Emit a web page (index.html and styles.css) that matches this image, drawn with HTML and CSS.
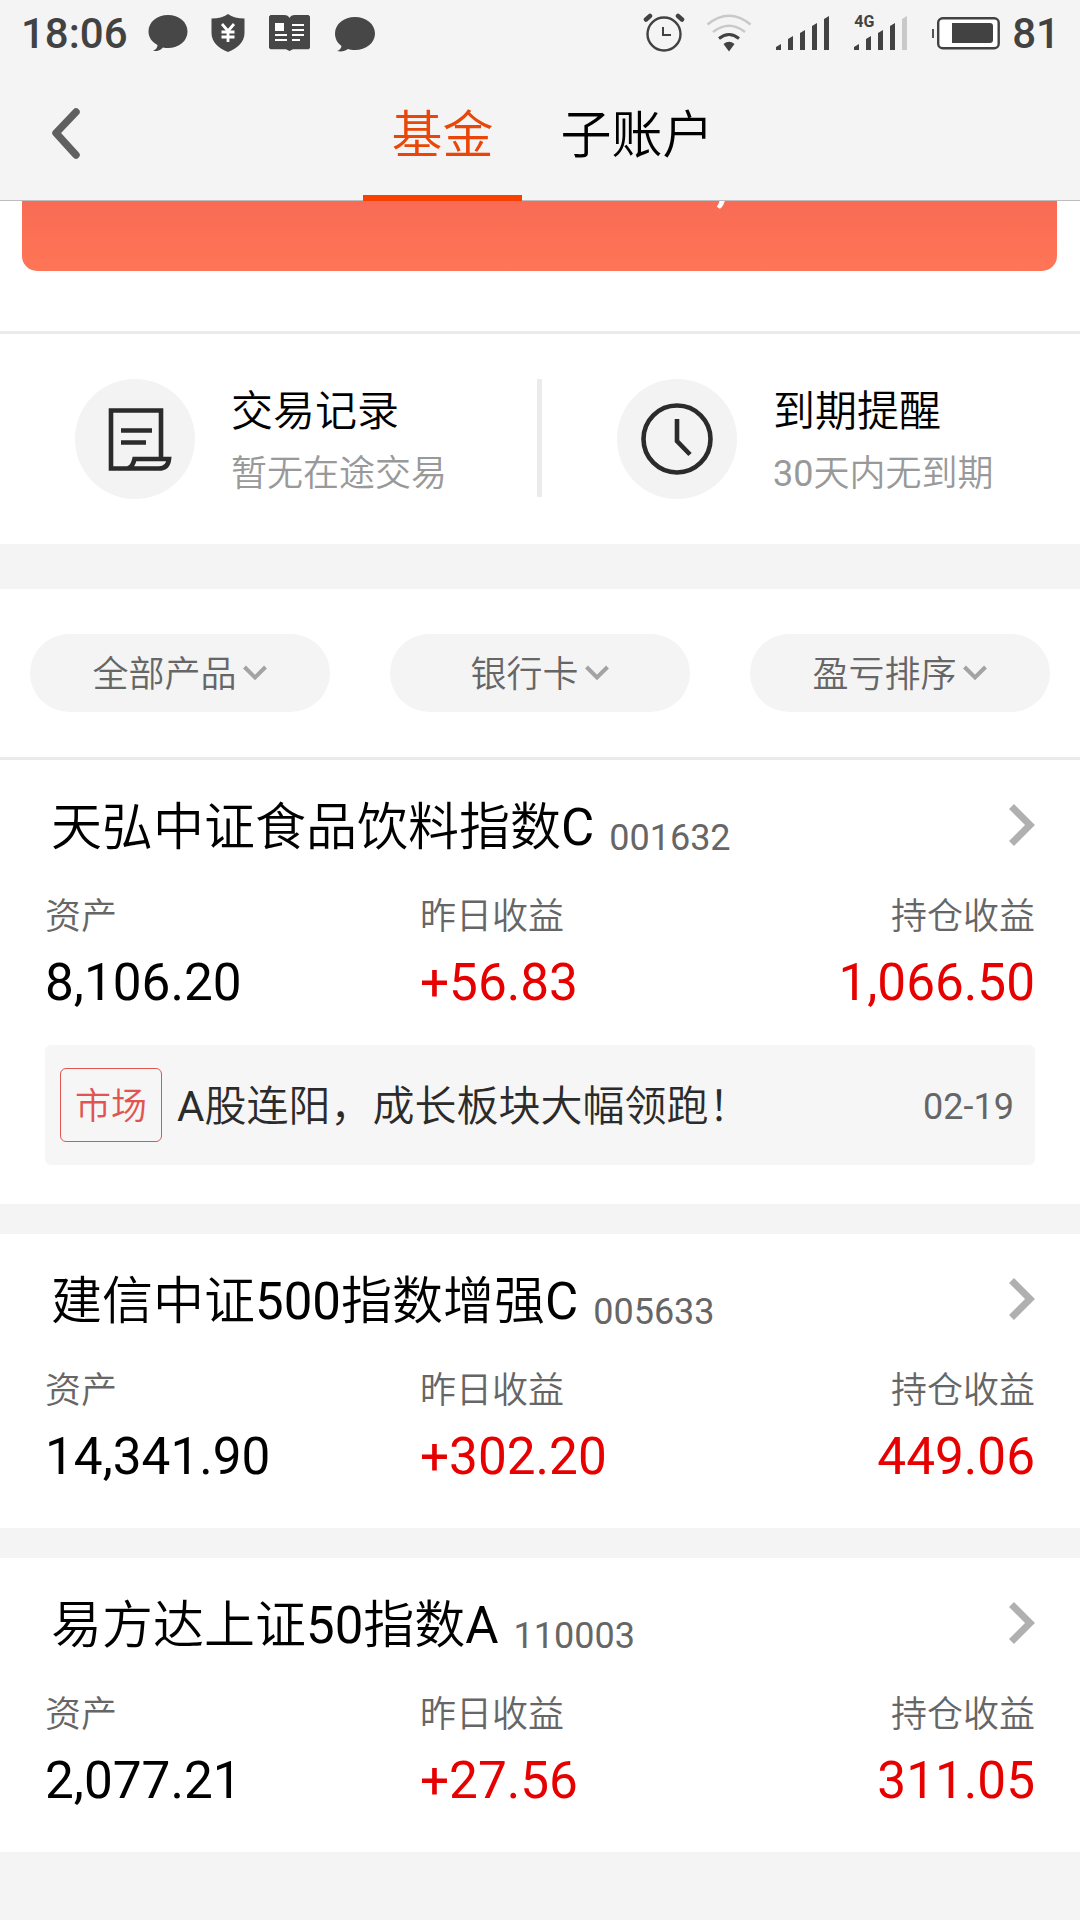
FILE: index.html
```html
<!DOCTYPE html>
<html lang="zh-CN">
<head>
  <meta charset="UTF-8">
  <meta name="viewport" content="width=device-width, initial-scale=1.0">
  <title>基金</title>
  <link rel="stylesheet" href="styles.css">
</head>
<body>
  <!-- Status Bar -->
  <div class="status-bar">
    <div class="status-left">
      <span class="status-time">18:06</span>
      <svg class="icon-bubble" width="40" height="37" viewBox="0 0 40 37">
        <path d="M20 0C31 0 39.500 7 39.500 16.500S31 33 20 33c-2 0-3.500-.2-5-.6C12 35.500 9 36.500 5 36c3-1.500 4.500-3.500 4.500-6C4 27 .5 22.500.5 16.500.5 7 9 0 20 0z" fill="#474747"/>
      </svg>
      <svg class="icon-shield" width="34" height="38" viewBox="0 0 34 38">
        <path d="M17 0c4 3 10 4.500 16.500 4.500V19c0 9-7 15.500-16.500 19C7.500 34.500.5 28 .5 19V4.500C7 4.500 13 3 17 0z" fill="#474747"/>
        <path d="M11 10l6 7 6-7M10.500 18h13M10.500 23h13M17 17v11" fill="none" stroke="#fff" stroke-width="2.800"/>
      </svg>
      <svg class="icon-book" width="41" height="37" viewBox="0 0 41 37">
        <path d="M1.500 1H15c3 0 4.500 1 5.500 3C21.500 2 23 1 26 1h13.500L41 2.500V34l-1.500 1.200H24L20.500 37 17 35.200H1.500L0 34V2.500z" fill="#474747"/>
        <path d="M6 9h9v8H6z" fill="#fff"/>
        <path d="M6 21h12M6 26h12M23 11h12M23 16h12M23 21h12M23 26h8" stroke="#fff" stroke-width="2"/>
      </svg>
      <svg class="icon-bubble-low" width="40" height="35" viewBox="0 0 40 35">
        <path d="M20 0c11 0 20 7 20 16.500S31 33 20 33c-3 0-5-.3-7-1-3 2.300-7 3-11 2 3-1 4-2.500 4.500-5C2.500 26 0 22 0 16.500 0 7 9 0 20 0z" fill="#474747"/>
      </svg>
    </div>
    <div class="status-right">
      <svg class="icon-alarm" width="42" height="39" viewBox="0 0 42 39">
        <circle cx="21" cy="21" r="16.500" fill="none" stroke="#424242" stroke-width="2.400"/>
        <path d="M20 14v8h8" fill="none" stroke="#424242" stroke-width="2"/>
        <path d="M3 6.500L7 3M39 6.500L35 3" stroke="#424242" stroke-width="4.500" stroke-linecap="round"/>
      </svg>
      <svg class="icon-wifi" width="46" height="38" viewBox="0 0 46 38">
        <path d="M1.500 10.500Q23-7 44.500 10.500M7 18Q23 5.500 39 18" fill="none" stroke="#c9c9c9" stroke-width="2.600"/>
        <path d="M13 24.500q10-8 20 0" fill="none" stroke="#424242" stroke-width="3"/>
        <path d="M17.500 30q5.500-4.500 11 0L23 37.500z" fill="#424242"/>
      </svg>
      <svg class="icon-signal" width="54" height="34" viewBox="0 0 54 34">
        <path d="M0 34v-3l5-3v6zM12 34V23l5-3v14zM24 34V17l5-3v20zM36 34V10l5-3v27zM48 34V3l5-3v34z" fill="#424242"/>
      </svg>
      <div class="signal-4g">
        <span class="network-label">4G</span>
        <svg width="54" height="34" viewBox="0 0 54 34">
          <path d="M0 34v-3l5-3v6zM12 34V23l5-3v14zM24 34V17l5-3v20zM36 34V10l5-3v27z" fill="#424242"/>
          <path d="M48 34V3l5-3v34z" fill="#c9c9c9"/>
        </svg>
      </div>
      <svg class="icon-battery" width="68" height="33" viewBox="0 0 68 33">
        <path d="M1 12v9" stroke="#424242" stroke-width="1.800"/>
        <rect x="6.200" y="1.200" width="60.500" height="30" rx="4.500" fill="#fff" stroke="#424242" stroke-width="2.400"/>
        <path d="M20 6h38q3 0 3 3v14q0 3-3 3H20z" fill="#424242"/>
      </svg>
      <span class="status-battery">81</span>
    </div>
  </div>

  <!-- Navigation -->
  <div class="nav">
    <svg class="back-btn" width="28" height="52" viewBox="0 0 28 52">
      <path d="M24 5L4 26l20 22" fill="none" stroke="#606060" stroke-width="7.500" stroke-linecap="round" stroke-linejoin="round"/>
    </svg>
    <div class="tab active">基金</div>
    <div class="tab">子账户</div>
  </div>

  <!-- Asset Banner -->
  <div class="banner-wrap">
    <div class="banner"><span class="banner-amount">,</span></div>
  </div>

  <!-- Quick Links -->
  <div class="quick-links">
    <div class="quick-item">
      <div class="quick-icon record">
        <svg width="64" height="64" viewBox="0 0 64 64">
          <path d="M53 51V3.500H3v58h19M26.500 52H61q-1 9.500-10 9.500H20q5-2 6.500-9.500z" fill="none" stroke="#2b2b2b" stroke-width="4.600"/>
          <path d="M13 23.500h31M13 35.500h25" stroke="#2b2b2b" stroke-width="4.500"/>
        </svg>
      </div>
      <div class="quick-text">
        <div class="quick-title">交易记录</div>
        <div class="quick-sub">暂无在途交易</div>
      </div>
    </div>
    <div class="quick-divider"></div>
    <div class="quick-item">
      <div class="quick-icon">
        <svg width="72" height="72" viewBox="0 0 72 72">
          <circle cx="36" cy="36" r="33.500" fill="none" stroke="#2b2b2b" stroke-width="4.600"/>
          <path d="M36 16v22l13 13.500" fill="none" stroke="#2b2b2b" stroke-width="4.600"/>
        </svg>
      </div>
      <div class="quick-text">
        <div class="quick-title">到期提醒</div>
        <div class="quick-sub">30天内无到期</div>
      </div>
    </div>
  </div>

  <!-- Filters -->
  <div class="filters">
    <div class="filter"><span>全部产品</span>
      <svg width="26" height="18" viewBox="0 0 26 18"><path d="M2.500 3L13 13.500 23.500 3" fill="none" stroke="#a3a3a3" stroke-width="4"/></svg>
    </div>
    <div class="filter"><span>银行卡</span>
      <svg width="26" height="18" viewBox="0 0 26 18"><path d="M2.500 3L13 13.500 23.500 3" fill="none" stroke="#a3a3a3" stroke-width="4"/></svg>
    </div>
    <div class="filter"><span>盈亏排序</span>
      <svg width="26" height="18" viewBox="0 0 26 18"><path d="M2.500 3L13 13.500 23.500 3" fill="none" stroke="#a3a3a3" stroke-width="4"/></svg>
    </div>
  </div>

  <!-- Fund List -->
  <div class="fund-list">
    <div class="fund">
      <div class="fund-head">
        <span class="fund-name">天弘中证食品饮料指数C</span>
        <span class="fund-code">001632</span>
        <svg class="fund-arrow" width="26" height="42" viewBox="0 0 26 42"><path d="M2.500 2.500L21 21 2.500 39.500" fill="none" stroke="#b0b0b0" stroke-width="7"/></svg>
      </div>
      <div class="fund-data">
        <div class="cell"><div class="label">资产</div><div class="value">8,106.20</div></div>
        <div class="cell"><div class="label">昨日收益</div><div class="value up">+56.83</div></div>
        <div class="cell right"><div class="label">持仓收益</div><div class="value up">1,066.50</div></div>
      </div>
      <div class="news">
        <span class="news-tag">市场</span>
        <span class="news-title">A股连阳，成长板块大幅领跑！</span>
        <span class="news-date">02-19</span>
      </div>
    </div>

    <div class="fund">
      <div class="fund-head">
        <span class="fund-name">建信中证500指数增强C</span>
        <span class="fund-code">005633</span>
        <svg class="fund-arrow" width="26" height="42" viewBox="0 0 26 42"><path d="M2.500 2.500L21 21 2.500 39.500" fill="none" stroke="#b0b0b0" stroke-width="7"/></svg>
      </div>
      <div class="fund-data">
        <div class="cell"><div class="label">资产</div><div class="value">14,341.90</div></div>
        <div class="cell"><div class="label">昨日收益</div><div class="value up">+302.20</div></div>
        <div class="cell right"><div class="label">持仓收益</div><div class="value up">449.06</div></div>
      </div>
    </div>

    <div class="fund">
      <div class="fund-head">
        <span class="fund-name">易方达上证50指数A</span>
        <span class="fund-code">110003</span>
        <svg class="fund-arrow" width="26" height="42" viewBox="0 0 26 42"><path d="M2.500 2.500L21 21 2.500 39.500" fill="none" stroke="#b0b0b0" stroke-width="7"/></svg>
      </div>
      <div class="fund-data">
        <div class="cell"><div class="label">资产</div><div class="value">2,077.21</div></div>
        <div class="cell"><div class="label">昨日收益</div><div class="value up">+27.56</div></div>
        <div class="cell right"><div class="label">持仓收益</div><div class="value up">311.05</div></div>
      </div>
    </div>
  </div>
</body>
</html>
```
FILE: styles.css
```css
/* General Styles */
* {
  box-sizing: border-box;
}

body {
  margin: 0;
  width: 1080px;
  height: 1920px;
  overflow: hidden;
  font-family: Roboto, 'Noto Sans CJK SC DemiLight', 'Noto Sans CJK SC', sans-serif;
  background-color: #f4f4f4;
  color: #000;
}

svg {
  display: block;
  flex-shrink: 0;
}

/* Status Bar */
.status-bar {
  display: flex;
  justify-content: space-between;
  height: 68px;
  padding: 0 20px 0 21px;
  color: #424242;
}

.status-left,
.status-right {
  display: flex;
  align-items: flex-start;
}

.status-time,
.status-battery {
  font-size: 42px;
  font-weight: 500;
  line-height: 67px;
}

.status-time {
  width: 127px;
}

.icon-bubble {
  margin-top: 15px;
}

.icon-shield {
  margin: 14px 0 0 23px;
}

.icon-book {
  margin: 14px 0 0 24px;
}

.icon-bubble-low {
  margin: 17px 0 0 25px;
}

.icon-alarm {
  margin-top: 13px;
}

.icon-wifi {
  margin: 14px 0 0 21px;
}

.icon-signal {
  margin: 16px 0 0 24px;
}

.signal-4g {
  position: relative;
  margin: 16px 0 0 24px;
}

.network-label {
  position: absolute;
  top: -3px;
  left: 0;
  font-size: 16px;
  font-weight: 700;
  line-height: 18px;
}

.icon-battery {
  margin: 17px 12px 0 24px;
}

/* Navigation */
.nav {
  display: flex;
  height: 133px;
  padding-left: 52px;
  border-bottom: 1px solid #bdbdbd;
}

.back-btn {
  margin: 39px 283px 0 0;
}

.tab {
  height: 133px;
  padding: 0 28.5px;
  font-size: 51px;
  line-height: 136px;
}

.tab + .tab {
  margin-left: 10px;
}

.tab.active {
  color: #e94709;
  border-bottom: 6px solid #f84000;
}

/* Asset Banner */
.banner-wrap {
  height: 133px;
  padding: 0 23px 0 22px;
  background-color: #fff;
  border-bottom: 3px solid #ebebeb;
}

.banner {
  height: 70px;
  overflow: hidden;
  border-radius: 0 0 15px 15px;
  background: linear-gradient(#f96b55, #ff7556);
}

.banner-amount {
  display: block;
  margin: -56px 0 0 694px;
  font-size: 60px;
  line-height: 70px;
  color: #fff;
}

/* Quick Links */
.quick-links {
  display: flex;
  height: 210px;
  padding-top: 45px;
  background-color: #fff;
}

.quick-item {
  display: flex;
  width: 537px;
  padding-left: 75px;
}

.quick-divider {
  width: 5px;
  height: 118px;
  background-color: #ebebeb;
}

.quick-icon {
  display: flex;
  justify-content: center;
  align-items: center;
  width: 120px;
  height: 120px;
  margin-right: 36px;
  border-radius: 50%;
  background-color: #f3f3f3;
}

.quick-icon.record {
  padding-left: 9px;
}

.quick-title {
  height: 62px;
  padding-top: 1px;
  font-size: 42px;
  line-height: 63px;
}

.quick-sub {
  font-size: 36px;
  line-height: 66px;
  color: #999;
}

/* Filters */
.filters {
  display: flex;
  gap: 60px;
  height: 171px;
  margin-top: 45px;
  padding: 45px 30px 0;
  background-color: #fff;
  border-bottom: 3px solid #ebebeb;
}

.filter {
  display: flex;
  justify-content: center;
  align-items: center;
  gap: 5px;
  width: 300px;
  height: 78px;
  border-radius: 39px;
  background-color: #f4f4f4;
  font-size: 36px;
  line-height: 50px;
  color: #666;
}

.filter span {
  padding-top: 3px;
}

/* Fund List */
.fund {
  height: 294px;
  margin-bottom: 30px;
  padding: 30px 45px 0;
  background-color: #fff;
}

.fund:first-child {
  height: 444px;
}

.fund-head {
  display: flex;
  align-items: center;
  height: 70px;
  padding-left: 6px;
}

.fund-name {
  padding-top: 6px;
  font-size: 51px;
  line-height: 70px;
}

.fund-code {
  margin: 27px 0 0 15px;
  font-size: 36px;
  line-height: 49px;
  color: #666;
}

.fund-arrow {
  margin-left: auto;
}

.fund-data {
  display: flex;
  padding-top: 32px;
}

.cell {
  width: 375px;
}

.cell.right {
  width: 240px;
  text-align: right;
}

.label {
  font-size: 36px;
  line-height: 50px;
  color: #666;
}

.value {
  margin-top: 11px;
  font-size: 51.3px;
  line-height: 60px;
}

.value.up {
  color: #e60000;
}

/* News */
.news {
  display: flex;
  align-items: center;
  height: 120px;
  margin-top: 32px;
  padding: 0 21px 0 15px;
  border-radius: 6px;
  background-color: #f6f6f6;
}

.news-tag {
  width: 102px;
  height: 74px;
  margin-right: 15px;
  border: 1px solid #e0554f;
  border-radius: 6px;
  font-size: 36px;
  line-height: 76px;
  text-align: center;
  color: #e0554f;
}

.news-title {
  padding-top: 3px;
  font-size: 42px;
  line-height: 60px;
  color: #2b2b2b;
}

.news-date {
  margin-left: auto;
  padding-top: 3px;
  font-size: 36px;
  color: #666;
}
```
